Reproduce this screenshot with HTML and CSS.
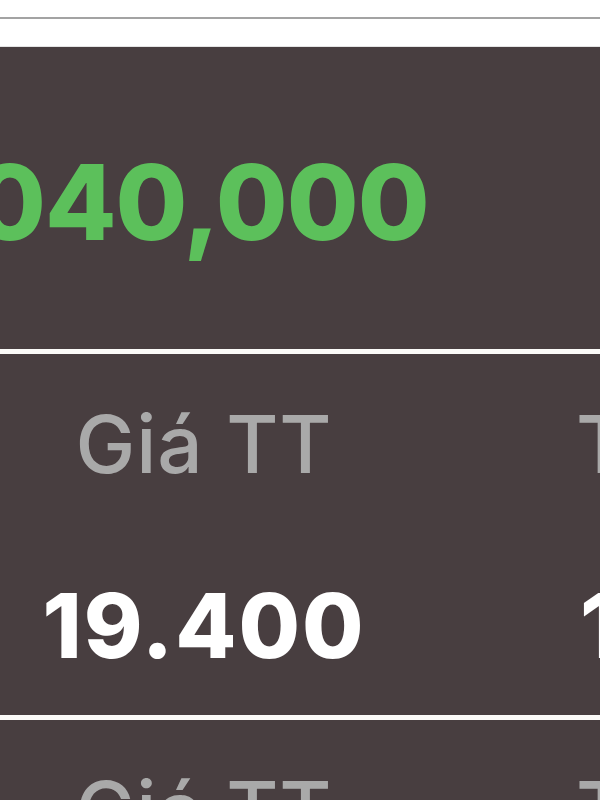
FILE: index.html
```html
<!DOCTYPE html>
<html lang="vi">
<head>
    <meta charset="UTF-8">
    <meta name="viewport" content="width=device-width, initial-scale=1.0">
    <title>Giá TT</title>
    <link rel="stylesheet" href="styles.css">
</head>
<body>
    <div class="top-bar">
        <div class="top-strip"></div>
        <div class="top-space"></div>
    </div>

    <div class="board">
        <div class="total">
            <div class="total-value">040,000</div>
        </div>

        <div class="price-row">
            <div class="cell">
                <div class="cell-label">Giá TT</div>
                <div class="cell-value">19.400</div>
            </div>
            <div class="cell cell-side">
                <div class="cell-label">TT</div>
                <div class="cell-value">1.000</div>
            </div>
        </div>

        <div class="price-row">
            <div class="cell">
                <div class="cell-label">Giá TT</div>
                <div class="cell-value">19.400</div>
            </div>
            <div class="cell cell-side">
                <div class="cell-label">TT</div>
                <div class="cell-value">1.000</div>
            </div>
        </div>
    </div>
</body>
</html>
```

FILE: styles.css
```css
body {
    margin: 0;
    width: 600px;
    height: 800px;
    overflow: hidden;
    background-color: #ffffff;
    font-family: 'Inter', 'Liberation Sans', sans-serif;
}

.top-strip {
    height: 17px;
    border-bottom: 2px solid #a3a3a3;
}

.top-space {
    height: 27px;
    border-bottom: 1px solid #e4e4e4;
}

.board {
    background-color: #483e40;
    min-height: 760px;
}

.total {
    padding: 103px 0 95px 0;
    overflow: hidden;
}

.total-value {
    margin-left: -26px;
    font-size: 104px;
    line-height: 1;
    font-weight: 800;
    letter-spacing: -1px;
    color: #5cc05b;
    white-space: nowrap;
}

.price-row {
    display: grid;
    grid-template-columns: 408px 192px;
    border-top: 5px solid #fbfaf8;
    padding: 50px 0 45px 0;
    overflow: hidden;
}

.cell {
    text-align: center;
    white-space: nowrap;
}

.cell-side {
    text-align: left;
    padding-left: 168px;
}

.cell-label {
    font-size: 80px;
    line-height: 1;
    font-weight: 500;
    letter-spacing: 1px;
    color: #a9a9a9;
    margin-bottom: 97px;
}

.cell-value {
    font-size: 89px;
    line-height: 1;
    font-weight: 800;
    letter-spacing: 2px;
    color: #ffffff;
}

.cell-side .cell-value {
    padding-left: 4px;
}
```
